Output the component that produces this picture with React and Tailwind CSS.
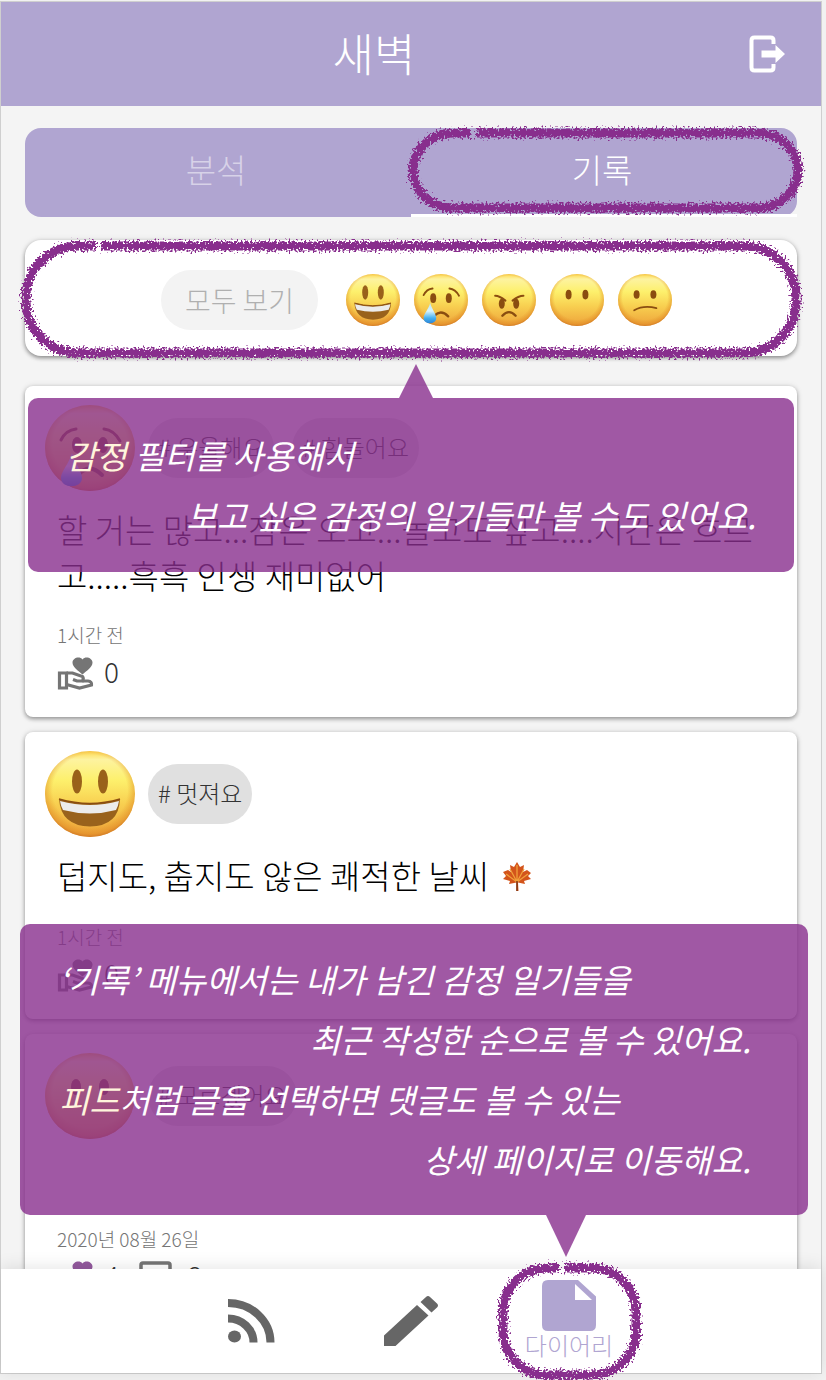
import React, { useId } from "react";

function Face({ mood, className }) {
  const id = useId().replace(/[^a-zA-Z0-9]/g, "");
  const brown = "#8a4d10";
  return (
    <svg viewBox="0 0 90 86" preserveAspectRatio="none" className={className} role="img" aria-label={mood}>
      <defs>
        <linearGradient id={`f${id}`} x1="0" y1="0" x2="0" y2="1">
          <stop offset="0" stopColor="#fdd84f" />
          <stop offset="0.1" stopColor="#fdf3a0" />
          <stop offset="0.34" stopColor="#fdf06c" />
          <stop offset="0.62" stopColor="#f8cf50" />
          <stop offset="1" stopColor="#eda23a" />
        </linearGradient>
        <radialGradient id={`e${id}`} cx="0.5" cy="0.46" r="0.56">
          <stop offset="0.74" stopColor="#e08a20" stopOpacity="0" />
          <stop offset="0.9" stopColor="#de8422" stopOpacity="0.5" />
          <stop offset="1" stopColor="#bf6420" stopOpacity="0.95" />
        </radialGradient>
        <linearGradient id={`t${id}`} x1="0" y1="0" x2="0" y2="1">
          <stop offset="0" stopColor="#b9e8fb" />
          <stop offset="0.4" stopColor="#d8f3fd" />
          <stop offset="0.75" stopColor="#45b0f0" />
          <stop offset="1" stopColor="#2d86d8" />
        </linearGradient>
      </defs>
      <ellipse cx="45" cy="43" rx="45" ry="43" fill={`url(#f${id})`} />
      <ellipse cx="45" cy="43" rx="45" ry="43" fill={`url(#e${id})`} />
      {mood === "smile" && (
        <g>
          <ellipse cx="32" cy="30.500" rx="5" ry="12" fill="#99611a" />
          <ellipse cx="58" cy="30.500" rx="5" ry="12" fill="#99611a" />
          <path d="M14 48Q45 57 75 48Q74 75 45 75.500Q16 75 14 48Z" fill="#99621c" />
          <path d="M15 50Q45 58 74 50Q73 56 71 59Q45 66 18 59Q16 56 15 50Z" fill="#ececec" />
          <path d="M14 48Q45 57 75 48" fill="none" stroke="#8a4d10" strokeWidth="1.600" />
        </g>
      )}
      {mood === "sad" && (
        <g>
          <ellipse cx="32" cy="40" rx="5" ry="8" fill={brown} />
          <ellipse cx="58" cy="40" rx="5" ry="8" fill={brown} />
          <path d="M16 35Q21 25 31 24" fill="none" stroke={brown} strokeWidth="3" strokeLinecap="round" />
          <path d="M59 24Q69 25 75 36" fill="none" stroke={brown} strokeWidth="3" strokeLinecap="round" />
          <path d="M34 69Q45 58 57 70" fill="none" stroke={brown} strokeWidth="4" strokeLinecap="round" />
          <path d="M27 48C24 59 16 66 16 73C16 84 37 84 37 73C37 66 30 59 27 48Z" fill={`url(#t${id})`} />
        </g>
      )}
      {mood === "angry" && (
        <g>
          <ellipse cx="33" cy="49" rx="5" ry="8.500" fill={brown} />
          <ellipse cx="57" cy="49" rx="5" ry="8.500" fill={brown} />
          <path d="M22 36Q29 36 39 44" fill="none" stroke={brown} strokeWidth="3.500" strokeLinecap="round" />
          <path d="M69 36Q61 36 51 44" fill="none" stroke={brown} strokeWidth="3.500" strokeLinecap="round" />
          <path d="M34 69Q45 57 56 69" fill="none" stroke={brown} strokeWidth="4" strokeLinecap="round" />
        </g>
      )}
      {mood === "blank" && (
        <g>
          <ellipse cx="31" cy="34" rx="5" ry="8" fill={brown} />
          <ellipse cx="59" cy="34" rx="5" ry="8" fill={brown} />
        </g>
      )}
      {mood === "confused" && (
        <g>
          <ellipse cx="31" cy="34" rx="5" ry="7" fill={brown} />
          <ellipse cx="59" cy="34" rx="5" ry="7" fill={brown} />
          <path d="M27 60Q43 51 64 56.500" fill="none" stroke={brown} strokeWidth="3" strokeLinecap="round" />
        </g>
      )}
    </svg>
  );
}

function CrayonRing({ radius, lead, className }) {
  const id = useId().replace(/[^a-zA-Z0-9]/g, "");
  return (
    <svg aria-hidden="true" className={`pointer-events-none absolute overflow-visible ${className}`}>
      <defs>
        <filter id={`c${id}`} x="-5%" y="-10%" width="110%" height="120%">
          <feTurbulence type="fractalNoise" baseFrequency="0.5" numOctaves="2" seed="7" result="n" />
          <feDisplacementMap in="SourceGraphic" in2="n" scale="13" xChannelSelector="R" yChannelSelector="G" />
        </filter>
      </defs>
      <rect
        x="5"
        y="5"
        rx={radius}
        ry={radius}
        className="h-[calc(100%-10px)] w-[calc(100%-10px)]"
        fill="none"
        stroke="#882e8d"
        strokeWidth="9"
        strokeDasharray={`${lead} 5 4000 0`}
        filter={`url(#c${id})`}
      />
    </svg>
  );
}

function ExitIcon() {
  return (
    <svg viewBox="0 0 36 38" className="h-[38px] w-9" aria-hidden="true">
      <path d="M24.500 9V5.500Q24.500 2.500 21.500 2.500H5.500Q2.500 2.500 2.500 5.500V32.500Q2.500 35.500 5.500 35.500H21.500Q24.500 35.500 24.500 32.500V29" fill="none" stroke="#fff" strokeWidth="4" />
      <path d="M12.500 15.500H26.500V10L36 19L26.500 28V22.500H12.500Z" fill="#fff" />
    </svg>
  );
}

function HandHeartIcon({ heart = "#757575" }) {
  return (
    <svg viewBox="0 0 37 33" className="h-[33px] w-[37px]" aria-hidden="true">
      <path d="M25.500 17.500C21 13.500 15.500 10 15.500 5.500C15.500 1 22.500-1.500 25.500 2.500C28.500-1.500 35.500 1 35.500 5.500C35.500 10 30 13.500 25.500 17.500Z" fill={heart} />
      <g fill="none" stroke="#757575" strokeWidth="3.200" strokeLinejoin="miter">
        <path d="M2.500 16H9.500V31H2.500Z" />
        <path d="M9.500 16H15.500L25.500 19.500Q27 21.500 25.500 24H20L16 22.500" />
        <path d="M25.500 24L31 24Q35 24.500 34.500 28L22.500 31L9.500 27.500" />
      </g>
    </svg>
  );
}

function CommentIcon() {
  return (
    <svg viewBox="0 0 33 33" className="size-[33px]" aria-hidden="true">
      <path d="M2 31V4Q2 2 4 2H29Q31 2 31 4V23Q31 25 29 25H8Z" fill="none" stroke="#757575" strokeWidth="3.500" />
    </svg>
  );
}

function LeafIcon() {
  return (
    <svg viewBox="0 0 30 30" className="ml-[6px] inline-block size-[30px] align-[-3px]" role="img" aria-label="단풍잎">
      <path d="M15 0L18 5L22 3L21 10L25 8L29 11L26 14L29 17L22 19L23 22L16 20.500L16.500 29H14.500L14.500 20.500L7 22L8 19L1 17L4 14L1 10L6 8L9 10L8 3L12 5Z" fill="#d3541b" />
      <path d="M15 3V20M15 20L8 7M15 20L22 7M15 20L4 12M15 20L26 12" stroke="#f1a03b" strokeWidth="1.300" fill="none" />
      <path d="M15 19V29" stroke="#7c3413" strokeWidth="1.500" />
    </svg>
  );
}

function Entry({ mood, tags, children, time, likes, liked, comments, overlay }) {
  return (
    <article className="relative rounded-lg bg-white px-5 pt-[19px] pb-[27px] shadow-[0_2px_4px_rgba(0,0,0,0.36),0_0_6px_rgba(0,0,0,0.1)]">
      <div className="flex items-center gap-[13px]">
        <Face mood={mood} className="h-[86px] w-[90px] shrink-0" />
        <ul className="flex gap-[18px]">
          {tags.map((t) => (
            <li key={t} className="flex h-[60px] items-center rounded-full bg-[#e0e0e0] px-[10px] pb-[2px] text-[24px] text-[#333]">
              # {t}
            </li>
          ))}
        </ul>
      </div>
      <div className="px-3">
        <p className="mt-[15px] min-h-[48px] text-[33px] leading-[46px] text-black">{children}</p>
        <time className="mt-[23px] block text-[19px] leading-7 text-[#757575]">{time}</time>
        <div className="mt-[7px] flex h-[34px] items-center text-[28px] leading-[34px] text-[#333]">
          <button type="button" aria-label="공감" className="flex items-center gap-[10px]">
            <HandHeartIcon heart={liked ? "#93599e" : "#757575"} />
            <span className="pb-[4px]">{likes}</span>
          </button>
          {comments != null && (
            <button type="button" aria-label="댓글" className="ml-5 flex items-center gap-[14px]">
              <CommentIcon />
              <span className="pb-[4px]">{comments}</span>
            </button>
          )}
        </div>
      </div>
      {overlay}
    </article>
  );
}

const moods = ["smile", "sad", "angry", "blank", "confused"];

export default function App() {
  return (
    <div className="h-screen bg-[#f1f1f1] pt-px pr-1 pb-[6px] font-['Noto_Sans_CJK_KR',sans-serif] font-light">
      <div className="flex h-full flex-col border border-[#cfcfcf] bg-[#f4f4f4]">
        <header className="flex h-[104px] shrink-0 items-center bg-[#b0a5d1] pr-9 text-white">
          <h1 className="flex-1 pb-1 pl-[34px] text-center text-[45px] leading-none">새벽</h1>
          <button type="button" aria-label="로그아웃" className="ml-9">
            <ExitIcon />
          </button>
        </header>

        <main className="min-h-0 flex-1 overflow-y-auto px-6 pt-[22px] [scrollbar-width:none]">
          <div role="tablist" className="relative grid h-[89px] grid-cols-2 rounded-2xl bg-[#b0a5d1] text-[33px] text-white">
            <button type="button" role="tab" aria-selected="false" className="pr-1 pb-[5px] text-white/50">
              분석
            </button>
            <button type="button" role="tab" aria-selected="true" className="relative border-b-[3px] border-white pr-1 pb-[2px]">
              기록
              <CrayonRing radius={40} lead={18} className="top-0 -left-[3px] h-[85px] w-[calc(100%+9px)]" />
            </button>
          </div>

          <section className="relative mt-[23px] flex h-[116px] items-center justify-center gap-[28px] rounded-2xl bg-white pt-[3px] shadow-[0_2px_4px_rgba(0,0,0,0.4),0_0_6px_rgba(0,0,0,0.1)]">
            <button type="button" className="ml-[11px] h-[60px] rounded-full bg-[#f3f3f3] px-6 text-[28px] text-[#b0b0b0]">
              모두 보기
            </button>
            <div className="flex gap-[14px]">
              {moods.map((m) => (
                <button key={m} type="button" aria-label={m}>
                  <Face mood={m} className="h-[52px] w-[54px]" />
                </button>
              ))}
            </div>
            <CrayonRing radius={52} lead={18} className="-left-[4px] top-px h-[117px] w-[calc(100%+8px)]" />
          </section>

          <div className="mt-[30px] flex flex-col gap-[15px]">
            <Entry
              mood="sad"
              tags={["우울해요", "힘들어요"]}
              time="1시간 전"
              likes={0}
              overlay={
                <aside className="absolute inset-x-[3px] top-[12px] rounded-[10px] bg-[#882e8d]/80 px-[38px] pt-[27px] pb-[27px] text-[33px] leading-[60px] font-normal text-white italic">
                  <svg viewBox="0 0 34 34" className="absolute bottom-full left-[calc(50%+5px)] size-[34px] -translate-x-1/2" aria-hidden="true">
                    <path d="M17 0L34 34H0Z" fill="#882e8d" fillOpacity="0.8" />
                  </svg>
                  <p>
                    <span className="text-[#fff5dc]">감정</span> 필터를 사용해서
                  </p>
                  <p className="text-right">보고 싶은 감정의 일기들만 볼 수도 있어요.</p>
                </aside>
              }
            >
              할 거는 많고...잠은 오고...놀고도 싶고....시간은 흐르
              <br />
              고.....흑흑 인생 재미없어
            </Entry>
            <Entry mood="smile" tags={["멋져요"]} time="1시간 전" likes={0}>
              덥지도, 춥지도 않은 쾌적한 날씨 <LeafIcon />
            </Entry>
            <Entry mood="blank" tags={["모르겠어요"]} time="2020년 08월 26일" likes={4} liked comments={6} />
          </div>
        </main>

        <nav className="relative flex h-[104px] shrink-0 items-center justify-center bg-white shadow-[0_-2px_16px_rgba(0,0,0,0.1)]">
          <a href="#feed" aria-label="피드" className="flex w-40 justify-center">
            <svg viewBox="0 0 47 44" className="h-11 w-[47px] text-[#666]" aria-hidden="true">
              <ellipse cx="6.500" cy="37.500" rx="6.500" ry="6" fill="currentColor" />
              <path d="M0 19.500A25.500 24 0 0 1 25.500 43.500M0 4A42.500 39.500 0 0 1 42.500 43.500" fill="none" stroke="currentColor" strokeWidth="8" />
            </svg>
          </a>
          <a href="#write" aria-label="글쓰기" className="flex w-40 justify-center">
            <svg viewBox="0 0 54 50" className="h-[50px] w-[54px] text-[#666]" aria-hidden="true">
              <path d="M0 39.500L33 9L44.500 19.500L11.500 50H0ZM36.500 6L42 1Q44 -1 46 1L53 7.500Q55 9.500 53 11.500L47.500 16.500Z" fill="currentColor" />
            </svg>
          </a>
          <a href="#diary" className="relative flex w-40 flex-col items-center pr-1 pb-1 text-[24px] leading-7 text-[#b0a5d1]">
            <svg viewBox="0 0 54 51" className="h-[51px] w-[54px]" aria-hidden="true">
              <path fillRule="evenodd" d="M6 0H36L54 16.500V45Q54 51 48 51H6Q0 51 0 45V6Q0 0 6 0ZM33 4V20H50Z" fill="currentColor" />
            </svg>
            다이어리
            <CrayonRing radius={44} lead={12} className="-top-[17px] left-[7px] h-[117px] w-[143px]" />
          </a>

          <aside className="absolute right-[13px] bottom-[calc(100%+54px)] left-[19px] rounded-[10px] bg-[#882e8d]/80 px-[39px] pt-[25px] pb-[26px] text-[33px] leading-[60px] font-normal text-white italic">
            <p>‘기록’ 메뉴에서는 내가 남긴 감정 일기들을</p>
            <p className="pr-[18px] text-right">최근 작성한 순으로 볼 수 있어요.</p>
            <p>
              <span className="text-[#fff5dc]">피드</span>처럼 글을 선택하면 댓글도 볼 수 있는
            </p>
            <p className="pr-[18px] text-right">상세 페이지로 이동해요.</p>
            <svg viewBox="0 0 40 42" className="absolute top-full left-[calc(50%+152px)] h-[42px] w-10 -translate-x-1/2" aria-hidden="true">
              <path d="M0 0H40L20 42Z" fill="#882e8d" fillOpacity="0.8" />
            </svg>
          </aside>
        </nav>
      </div>
    </div>
  );
}
